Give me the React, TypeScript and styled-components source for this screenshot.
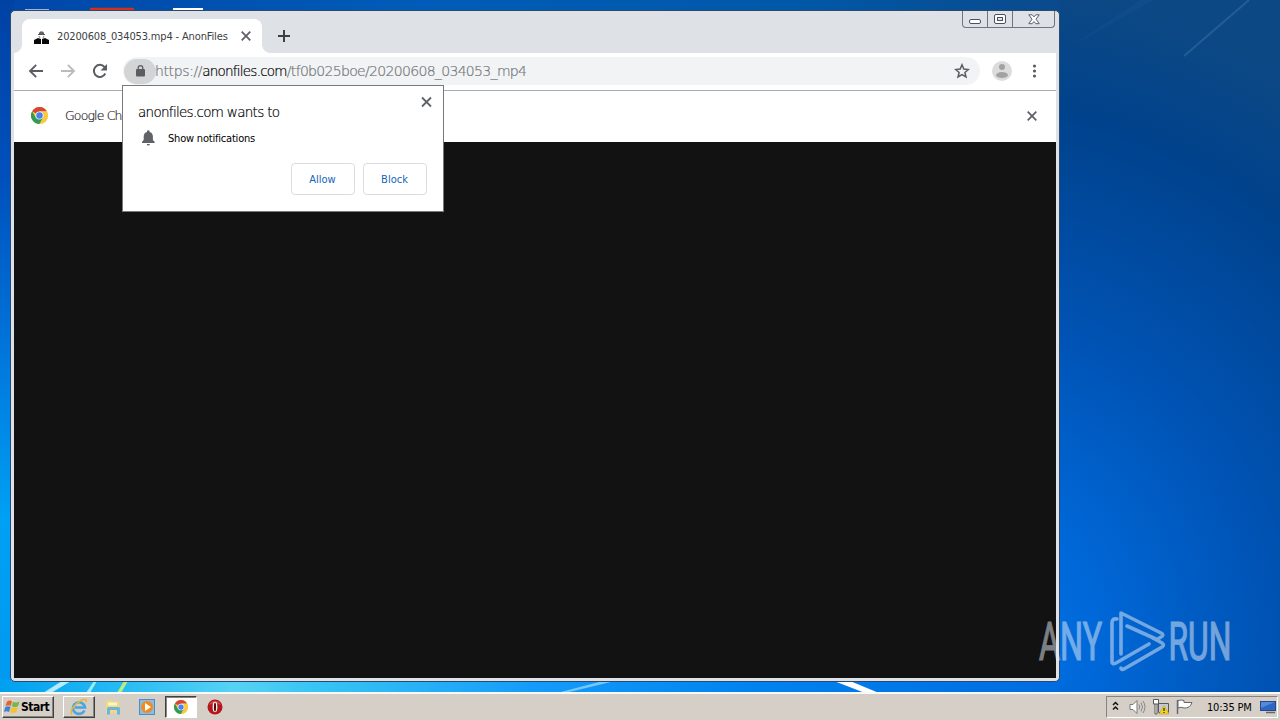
import type { ReactNode } from 'react';
import styled, { createGlobalStyle, css } from 'styled-components';

const GlobalStyle = createGlobalStyle`
    * {
        box-sizing: border-box;
    }
    body {
        margin: 0;
        overflow: hidden;
        font-family: 'DejaVu Sans Condensed', 'DejaVu Sans', sans-serif;
        font-size: 11px;
        color: #000;
    }
    svg {
        display: block;
        flex: none;
    }
`;

const Desktop = styled.div`
    position: relative;
    display: flex;
    flex-direction: column;
    width: 1280px;
    height: 720px;
    overflow: hidden;
    background: #0058b8;
`;

const Wallpaper = styled.svg`
    position: absolute;
    inset: 0;
`;

const Workspace = styled.div`
    position: relative;
    flex: 1;
`;

const Window = styled.div`
    position: absolute;
    left: 10px;
    top: 10px;
    width: 1050px;
    height: 672px;
    display: flex;
    flex-direction: column;
    padding: 1px 3px 3px 3px;
    border: 1px solid #2b4a6c;
    border-radius: 5px;
    background: #dee1e6;
`;

const TabStrip = styled.div`
    display: flex;
    height: 41px;
    padding: 7px 0 0 8px;
    background: #dee1e6;
`;

const Tab = styled.div`
    position: relative;
    display: flex;
    align-items: center;
    width: 240px;
    height: 34px;
    padding: 0 11px 0 12px;
    border-radius: 8px 8px 0 0;
    background: #fff;

    &::before,
    &::after {
        content: '';
        position: absolute;
        bottom: 0;
        width: 8px;
        height: 8px;
    }
    &::before {
        left: -8px;
        background: radial-gradient(circle at 0 0, transparent 7.5px, #fff 8px);
    }
    &::after {
        right: -8px;
        background: radial-gradient(circle at 100% 0, transparent 7.5px, #fff 8px);
    }
`;

const Text = styled.span<{ $size?: number; $spacing?: number; $color?: string; $weight?: number }>`
    font-size: ${({ $size = 11 }) => $size}px;
    letter-spacing: ${({ $spacing = 0 }) => $spacing}px;
    color: ${({ $color = '#000' }) => $color};
    font-weight: ${({ $weight = 400 }) => $weight};
    white-space: nowrap;
`;

const ThinText = styled(Text)`
    font-family: 'DejaVu Sans', sans-serif;
    font-weight: 200;
    -webkit-text-stroke: 0.2px currentColor;
`;

const TabTitle = styled(Text)`
    flex: 1;
    margin-left: 8px;
`;

const NewTab = styled.div`
    display: flex;
    align-items: center;
    height: 34px;
    margin-left: 16px;
`;

const WindowControls = styled.div`
    display: flex;
    height: 17px;
    margin: -8px 1px 0 auto;
    border: 1px solid #6f7580;
    border-top: 0;
    border-radius: 0 0 4px 4px;
`;

const WindowControl = styled.div<{ $width: number }>`
    display: flex;
    align-items: center;
    justify-content: center;
    width: ${({ $width }) => $width}px;

    & + & {
        border-left: 1px solid #6f7580;
    }
`;

const Toolbar = styled.div`
    display: flex;
    align-items: center;
    height: 38px;
    padding: 0 11px 1px 14px;
    border-bottom: 1px solid #a9abae;
    background: #fff;
`;

const NavButtons = styled.div`
    display: flex;
    gap: 16px;
    margin-right: 15px;
`;

const AddressBar = styled.div`
    display: flex;
    align-items: center;
    width: 857px;
    height: 28px;
    padding-right: 10px;
    border-radius: 14px;
    background: #f1f3f4;
`;

const LockChip = styled.div`
    display: flex;
    align-items: center;
    justify-content: center;
    width: 32px;
    height: 25px;
    margin-left: 1px;
    border-radius: 13px;
    background: #d2d4d6;
`;

const Url = styled.div`
    display: flex;
    flex: 1;
    margin-left: -1px;
    white-space: nowrap;
`;

const Avatar = styled.div`
    margin: 0 17px 0 12px;
`;

const InfoBar = styled.div`
    display: flex;
    align-items: center;
    height: 51px;
    padding: 0 19px 2px 17px;
    background: #fff;
`;

const InfoText = styled(ThinText)`
    flex: 1;
    margin-left: 17px;
`;

const Page = styled.div`
    flex: 1;
    background: #121212;
`;

const Popup = styled.div`
    position: absolute;
    left: 122px;
    top: 85px;
    display: flex;
    flex-direction: column;
    width: 322px;
    height: 127px;
    padding: 8px 16px 16px 15px;
    border: 1px solid #77797b;
    background: #fff;
`;

const PopupHeader = styled.div`
    display: flex;
    justify-content: space-between;
    height: 33px;
    margin-right: -5px;
`;

const PopupTitle = styled(ThinText)`
    padding-top: 10px;
    line-height: 17px;
`;

const Permission = styled.div`
    display: flex;
    align-items: center;
    gap: 11px;
    height: 22px;
    padding-left: 2px;
`;

const PopupActions = styled.div`
    display: flex;
    justify-content: flex-end;
    gap: 8px;
    margin-top: auto;
`;

const PopupButton = styled.button`
    width: 64px;
    height: 32px;
    padding: 0 1px 0 0;
    border: 1px solid #dadce0;
    border-radius: 4px;
    background: #fff;
    font: inherit;
    color: #1565b8;
`;

const Taskbar = styled.div`
    position: relative;
    display: flex;
    align-items: center;
    height: 28px;
    padding: 1px 2px 1px;
    border-top: 2px solid #f8f8f4;
    background: #d6cfc7;
`;

const raised = css`
    border: 1px solid;
    border-color: #fff #404040 #404040 #fff;
    box-shadow: inset -1px -1px 0 #87837d;
`;

const StartButton = styled.div`
    display: flex;
    align-items: center;
    gap: 1px;
    width: 52px;
    height: 22px;
    padding-left: 1px;
    ${raised}
`;

const TaskButton = styled.div<{ $state?: 'raised' | 'pressed' }>`
    display: flex;
    align-items: center;
    justify-content: center;
    width: 32px;
    height: 22px;
    margin-right: 2px;
    ${({ $state }) => $state === 'raised' && raised}
    ${({ $state }) => $state === 'pressed' && css`
        border: 1px solid;
        border-color: #404040 #fff #fff #404040;
        box-shadow: inset 1px 1px 0 #87837d;
        background: #fff;
    `}
`;

const TaskButtons = styled.div`
    display: flex;
    margin-left: 9px;
`;

const Tray = styled.div`
    display: flex;
    align-items: center;
    width: 172px;
    height: 22px;
    margin-left: auto;
    padding-left: 5px;
    border: 1px solid;
    border-color: #87837d #fff #fff #87837d;
`;

const TrayIcons = styled.svg`
    margin-left: 8px;
`;

const Clock = styled(Text)`
    margin: 0 8px 0 13px;
`;

const Watermark = styled.svg`
    position: absolute;
    left: 1030px;
    top: 600px;
`;

const Svg = ({ w, h = w, children }: { w: number; h?: number; children: ReactNode }) => (
    <svg width={w} height={h} viewBox={`0 0 ${w} ${h}`} fill="none">{children}</svg>
);

const CloseIcon = ({ size = 10, color = '#5f6368', width = 1.8 }) => (
    <Svg w={size}>
        <path d={`M.7.7L${size - 0.7} ${size - 0.7}M${size - 0.7}.7L.7 ${size - 0.7}`} stroke={color} strokeWidth={width} />
    </Svg>
);

const ArrowIcon = ({ flip = false, color }: { flip?: boolean; color: string }) => (
    <Svg w={16}>
        <path
            d="M15 8H2.2M8.2 1.8L2 8l6.2 6.2"
            stroke={color}
            strokeWidth="1.9"
            transform={flip ? 'matrix(-1 0 0 1 16 0)' : undefined}
        />
    </Svg>
);

const ChromeIcon = ({ size }: { size: number }) => (
    <svg width={size} height={size} viewBox="0 0 48 48">
        <circle cx="24" cy="24" r="24" fill="#fbc940" />
        <path d="M24 24L3.2 12A24 24 0 0 1 44.8 12H24z" fill="#d6453a" />
        <path d="M3.2 12A24 24 0 0 0 24 48L34.4 30 24 24 13.6 30z" fill="#2f9c56" />
        <path d="M24 13h21.3A24 24 0 0 1 24 48l10.4-18z" fill="#fbc940" />
        <circle cx="24" cy="24" r="11.5" fill="#e8eefc" />
        <circle cx="24" cy="24" r="9" fill="#4a80ec" />
    </svg>
);

const App = () => {
    return (
        <Desktop>
            <GlobalStyle />
            <Wallpaper width="1280" height="720" viewBox="0 0 1280 720">
                <defs>
                    <linearGradient id="top">
                        <stop offset="0" stopColor="#0046a8" />
                        <stop offset=".4" stopColor="#005cb8" />
                        <stop offset=".75" stopColor="#0058a8" />
                        <stop offset="1" stopColor="#0a4a8c" />
                    </linearGradient>
                    <linearGradient id="left" x2="0" y2="1">
                        <stop offset="0" stopColor="#0042a4" />
                        <stop offset=".25" stopColor="#0050bc" />
                        <stop offset=".5" stopColor="#0078dc" />
                        <stop offset=".72" stopColor="#00a0f4" />
                        <stop offset="1" stopColor="#0098ee" />
                    </linearGradient>
                    <radialGradient id="right" gradientUnits="userSpaceOnUse" cx="940" cy="640" r="660">
                        <stop offset="0" stopColor="#0078ea" />
                        <stop offset=".22" stopColor="#0069da" />
                        <stop offset=".5" stopColor="#0053b4" />
                        <stop offset=".82" stopColor="#00428c" />
                        <stop offset="1" stopColor="#0c4884" />
                    </radialGradient>
                    <linearGradient id="bottom">
                        <stop offset="0" stopColor="#00a0f0" />
                        <stop offset=".1" stopColor="#20b8f4" />
                        <stop offset=".22" stopColor="#56d2f4" />
                        <stop offset=".3" stopColor="#38c4f4" />
                        <stop offset=".5" stopColor="#159cfa" />
                        <stop offset=".7" stopColor="#0084f0" />
                        <stop offset="1" stopColor="#006cdf" />
                    </linearGradient>
                </defs>
                <rect width="1280" height="720" fill="url(#right)" />
                <rect width="1060" height="12" fill="url(#top)" />
                <rect width="14" height="720" fill="url(#left)" />
                <rect y="680" width="1060" height="14" fill="url(#bottom)" />
                <path d="M1184 56L1249 0" stroke="#5a8fc0" strokeWidth="2" opacity=".3" />
                <path d="M1070 47L1140 0h14z" fill="#2b68a6" opacity=".15" />
                <path d="M43 693L62 681h9L51 693z" fill="#c8f2fc" opacity=".9" />
                <path d="M86 693l8-12h3l-7 12z" fill="#a0eaf8" />
                <path d="M117 693l7-12h4l-7 12z" fill="#b8f080" />
                <path d="M557 693l42-11h12l-46 11z" fill="#90d4fc" opacity=".8" />
                <path d="M834 681h16l29 12h-14z" fill="#fff" />
                <path d="M25 9.500h24" stroke="#9fb4d4" />
                <path d="M90 9h44" stroke="#d0301e" strokeWidth="2.500" />
                <path d="M173 9h30" stroke="#fff" strokeWidth="2" />
            </Wallpaper>
            <Workspace>
                <Window>
                    <TabStrip>
                        <Tab>
                            <Svg w={15}>
                                <path d="M0 15v-4l4-2 3 1v5zM8 15v-5l3-1 4 2v4z" fill="#090909" />
                                <path d="M4 5.500h7M5.500 5L6 3h3l.5 2z" stroke="#555" fill="#777" />
                                <path d="M5 7l1 2M10 7L9 9" stroke="#888" />
                            </Svg>
                            <TabTitle $spacing={-0.15} $color="#3c4043">20200608_034053.mp4 - AnonFiles</TabTitle>
                            <CloseIcon />
                        </Tab>
                        <NewTab>
                            <Svg w={12}><path d="M6 0v12M0 6h12" stroke="#3c4043" strokeWidth="2" /></Svg>
                        </NewTab>
                        <WindowControls>
                            <WindowControl $width={24}>
                                <Svg w={13} h={11}><rect x=".5" y="5.500" width="11" height="4" rx="1.500" stroke="#4c5060" fill="#fff" /></Svg>
                            </WindowControl>
                            <WindowControl $width={25}>
                                <Svg w={12} h={11}>
                                    <rect x=".5" y=".5" width="11" height="9" rx="1.500" stroke="#4c5060" fill="#fff" />
                                    <rect x="3.500" y="3.500" width="5" height="3" stroke="#4c5060" fill="#dee1e6" />
                                </Svg>
                            </WindowControl>
                            <WindowControl $width={42}>
                                <Svg w={12} h={11}>
                                    <path
                                        d="M.8.8h3.4L6 2.900 7.800.8h3.400L8 5.200l3.200 4.500H7.800L6 7.500 4.200 9.700H.8L4 5.200z"
                                        stroke="#4c5060"
                                        strokeWidth=".9"
                                        fill="#fff"
                                    />
                                </Svg>
                            </WindowControl>
                        </WindowControls>
                    </TabStrip>
                    <Toolbar>
                        <NavButtons>
                            <ArrowIcon color="#5a5d61" />
                            <ArrowIcon flip color="#b9bbbe" />
                            <Svg w={16}>
                                <path d="M13.300 10.500A6 6 0 1 1 12.500 4" stroke="#5a5d61" strokeWidth="2" />
                                <path d="M15 1v6.500H8.500z" fill="#5a5d61" />
                            </Svg>
                        </NavButtons>
                        <AddressBar>
                            <LockChip>
                                <Svg w={9} h={12}>
                                    <rect y="4" width="9" height="7.500" rx="1" fill="#5a5d61" />
                                    <path d="M2.200 5V3a2.300 2.300 0 0 1 4.600 0v2" stroke="#5a5d61" strokeWidth="1.300" />
                                </Svg>
                            </LockChip>
                            <Url>
                                <ThinText $size={14} $spacing={-0.38} $color="#70757a">https://</ThinText>
                                <ThinText $size={13.5} $spacing={-0.75}>anonfiles.com</ThinText>
                                <ThinText $size={14} $spacing={-0.68} $color="#70757a">/tf0b025boe/20200608_034053_mp4</ThinText>
                            </Url>
                            <Svg w={16}>
                                <path
                                    d="M8 1.800l1.800 4.300 4.600.4-3.500 3 1.100 4.500L8 11.600 4 14l1.100-4.500-3.500-3 4.600-.4z"
                                    stroke="#5a5d61"
                                    strokeWidth="1.500"
                                />
                            </Svg>
                        </AddressBar>
                        <Avatar>
                            <Svg w={20}>
                                <circle cx="10" cy="10" r="10" fill="#dcdcdc" />
                                <circle cx="10" cy="6" r="3" fill="#a2a2a2" />
                                <ellipse cx="10" cy="14" rx="6" ry="3" fill="#a2a2a2" />
                            </Svg>
                        </Avatar>
                        <Svg w={16}>
                            <circle cx="5.500" cy="3" r="1.600" fill="#5a5d61" />
                            <circle cx="5.500" cy="8" r="1.600" fill="#5a5d61" />
                            <circle cx="5.500" cy="13" r="1.600" fill="#5a5d61" />
                        </Svg>
                    </Toolbar>
                    <InfoBar>
                        <ChromeIcon size={17} />
                        <InfoText $size={12.5} $spacing={-0.85} $color="#202124">Google Ch</InfoText>
                        <CloseIcon />
                    </InfoBar>
                    <Page />
                </Window>
                <Popup>
                    <PopupHeader>
                        <PopupTitle $size={13.5} $spacing={-0.7}>anonfiles.com wants to</PopupTitle>
                        <Svg w={11} h={16}><path d="M1 3.500l9 9M10 3.500l-9 9" stroke="#5f6368" strokeWidth="1.800" /></Svg>
                    </PopupHeader>
                    <Permission>
                        <Svg w={17} h={16}>
                            <path d="M2 13v-1.200L3.700 10V6.500C3.700 4 5 2.300 7 1.900V1.500a1.300 1.300 0 0 1 2.600 0v.4c2 .4 3.300 2.100 3.300 4.600V10l1.700 1.800V13zM6.800 14h3a1.500 1.500 0 0 1-3 0z" fill="#606267" />
                        </Svg>
                        <Text $spacing={-0.2}>Show notifications</Text>
                    </Permission>
                    <PopupActions>
                        <PopupButton>Allow</PopupButton>
                        <PopupButton>Block</PopupButton>
                    </PopupActions>
                </Popup>
            </Workspace>
            <Taskbar>
                <StartButton>
                    <Svg w={16}>
                        <path d="M3 2.500C5 1 6.500 1.300 8 2.200L6.700 7C5 6 3.500 6 1.500 7z" fill="#e8622a" />
                        <path d="M9 2.700c2 1 4 1 6.500-.3L14 7.300c-2.500 1.200-4.500 1-6.300 0z" fill="#74b74a" />
                        <path d="M1.300 8c2-1.200 3.600-1 5.200 0L5 13c-1.700-1-3.200-1-5 0z" fill="#3b83d4" />
                        <path d="M7.400 8.300c2 1 4 1 6.400 0L12.400 13c-2.300 1.200-4.300 1.200-6.300 0z" fill="#f5c22e" />
                    </Svg>
                    <Text $size={12} $weight={700} $spacing={-0.5}>Start</Text>
                </StartButton>
                <TaskButtons>
                    <TaskButton $state="raised">
                        <Svg w={18}>
                            <path d="M14.500 12.500A6 5.800 0 1 1 15 9.500H5" stroke="#4aa5e2" strokeWidth="2.600" />
                            <path d="M2 16.500C-1 13 5 5 12 2c4-1.600 5 0 4 2.500" stroke="#e8b92e" strokeWidth="1.500" />
                        </Svg>
                    </TaskButton>
                    <TaskButton>
                        <Svg w={16}>
                            <path d="M1 2l5-1 1 1.500h7V14H1z" fill="#efd983" />
                            <path d="M3 3.500h9v3H3z" fill="#fff4bc" />
                            <path d="M2 15.500V9.500Q2 8 4 8h9q2 0 2 1.500v6h-3V11H5v4.500z" fill="#6bb6dc" />
                        </Svg>
                    </TaskButton>
                    <TaskButton>
                        <Svg w={16}>
                            <rect x=".5" y=".5" width="15" height="15" fill="#8bbce4" stroke="#4b8dca" />
                            <circle cx="8" cy="8" r="6" fill="#f28a1c" />
                            <path d="M6 4l6 4-6 4z" fill="#fff" />
                        </Svg>
                    </TaskButton>
                    <TaskButton $state="pressed">
                        <ChromeIcon size={14} />
                    </TaskButton>
                    <TaskButton>
                        <Svg w={16}>
                            <circle cx="8" cy="8" r="7.500" fill="#b5161c" />
                            <path d="M2 6a6.500 6.500 0 0 1 12 0Q8 3 2 6z" fill="#e0686a" opacity=".6" />
                            <ellipse cx="8" cy="8" rx="2.400" ry="5.200" fill="#fff" />
                            <ellipse cx="8" cy="8" rx="1.100" ry="4.500" fill="#5a080c" />
                        </Svg>
                    </TaskButton>
                </TaskButtons>
                <Tray>
                    <Svg w={8} h={12}><path d="M1 4l2.500-2.500L6 4M1 8.500L3.500 6 6 8.500" stroke="#111" strokeWidth="1.500" /></Svg>
                    <TrayIcons width="66" height="16" viewBox="0 0 66 16" fill="none">
                        <path d="M2 5.500h3l4-4v13l-4-4H2z" fill="#fff" stroke="#77797c" />
                        <path d="M11 5.500q1.500 2.500 0 5M13 3.500q3 4.500 0 9M15 2q4 6 0 12" stroke="#88898c" />
                        <path d="M30.500 4.500h10v9h-10z" fill="#c5cbd4" stroke="#56585c" />
                        <path d="M25.500.5h5v4.500h-5zM27 5v10h2V5" fill="#fff" stroke="#55575b" />
                        <path d="M36 6.500l5 8.500H31z" fill="#f6d321" stroke="#c69a10" strokeWidth=".6" />
                        <path d="M36 9v3M36 13v1" stroke="#222" strokeWidth="1.200" />
                        <path d="M49.500 1v14" stroke="#66686c" strokeWidth="1.500" />
                        <path d="M50 1.500q3-1 6 0v2h8q-2 6-8 5.500-3-1.500-6 0z" fill="#fff" stroke="#66686c" />
                    </TrayIcons>
                    <Clock $spacing={-0.2}>10:35 PM</Clock>
                    <Svg w={16} h={14}>
                        <rect x=".5" y="1.500" width="15" height="9" fill="#2d66c4" stroke="#274a86" />
                        <path d="M1 2h14L1 8z" fill="#6fa0e8" opacity=".6" />
                        <path d="M6 12.500h9" stroke="#666" strokeWidth="1.500" />
                    </Svg>
                </Tray>
            </Taskbar>
            <Watermark width="230" height="80" viewBox="0 0 230 80" fill="none" opacity=".5">
                <g
                    fill="#e6eef6"
                    stroke="#e6eef6"
                    strokeWidth="1.200"
                    fontFamily="'Liberation Sans Narrow', Roboto, sans-serif"
                    fontSize="53"
                >
                    <text transform="translate(9 60) scale(.61 1)">ANY</text>
                    <text transform="translate(138.500 60) scale(.6 1)">RUN</text>
                </g>
                <g stroke="#e6eef6" strokeWidth="3.600" strokeLinejoin="round" strokeLinecap="round">
                    <path d="M91 54V13L132 33.500q2 2-1 3.500l-4 2.500L97 26" />
                    <path d="M123 38l9 5q3 2 0 4L94 69q-3 1-3-1" />
                    <path d="M87 19q-5-1-5 4v39q0 3 4 1l33-19" />
                </g>
            </Watermark>
        </Desktop>
    );
};

export default App;
